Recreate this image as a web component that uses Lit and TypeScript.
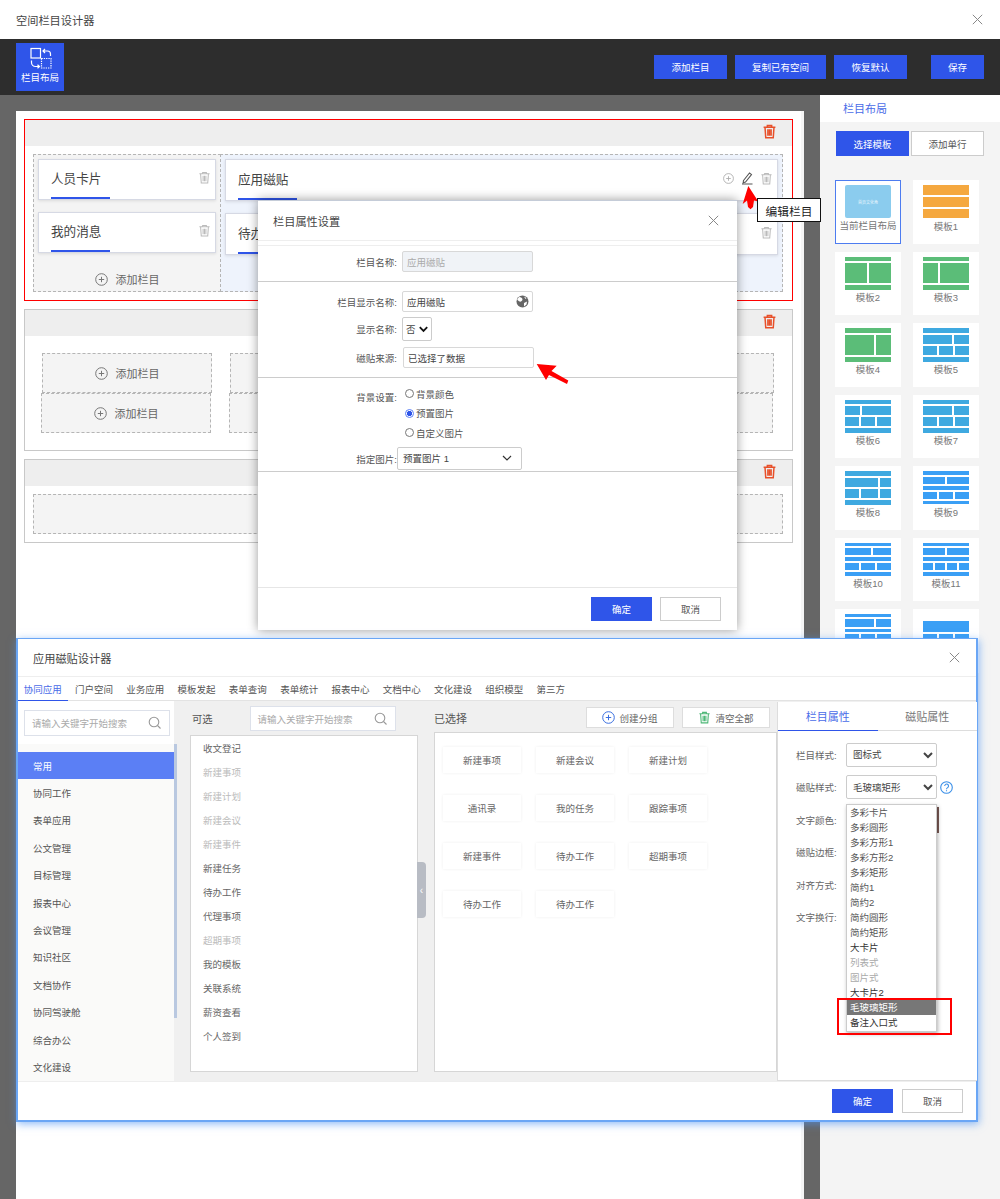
import { LitElement, html, css, svg } from "lit";
import { customElement } from "lit/decorators.js";

type Tpl = { name: string; color: string; rows: [number, string][]; skipFirst?: boolean };
const G = "#5bbd78", B = "#3fa9e0", C = "#3a9ff5", O = "#f5a83f";
const band: [number, string] = [4.5, "1fr"];
const templates: Tpl[] = [
  { name: "模板1", color: O, rows: [[1, "1fr"], [1, "1fr"], [1, "1fr"]] },
  { name: "模板2", color: G, rows: [[5, "1fr"], [20, "1fr 1fr"], [5, "1fr"]] },
  { name: "模板3", color: G, rows: [[5, "1fr"], [20, "1fr 2fr"], [5, "1fr"]] },
  { name: "模板4", color: G, rows: [[5, "1fr"], [20, "2fr 1fr"], [5, "1fr"]] },
  { name: "模板5", color: B, rows: [band, [9, "2fr 1fr"], [9, "1fr 1fr 1fr"], band] },
  { name: "模板6", color: B, rows: [band, [9, "1fr 2fr"], [9, "1fr 1fr 1fr"], band] },
  { name: "模板7", color: B, rows: [band, [9, "2fr 1fr"], [9, "1fr 1fr 1fr"], band] },
  { name: "模板8", color: B, rows: [band, [9, "33fr 11fr"], [9, "14fr 18fr 11fr"], band] },
  { name: "模板9", color: C, rows: [[4, "1fr"], [7, "1fr 1fr"], [4, "1fr"], [7, "1fr 1fr 1fr"], [4, "1fr"]] },
  { name: "模板10", color: C, rows: [[4, "1fr"], [7, "3fr 2fr"], [4, "1fr"], [7, "1fr 1fr 1fr"], [4, "1fr"]] },
  { name: "模板11", color: C, rows: [[4, "1fr"], [7, "1fr 1fr"], [4, "1fr"], [7, "1fr 1fr 1fr 1fr"], [4, "1fr"]] },
  { name: "模板12", color: C, rows: [[3, "1fr"], [7, "2fr 1fr"], [3, "1fr"], [7, "1fr 1fr 1fr"], [3, "1fr"]] },
  { name: "模板13", color: C, skipFirst: true, rows: [[4, "1fr"], [10, "1fr"], [7, "1fr 1fr 1fr"], [3, "1fr"]] },
];

const trash = (c: string, s = 14, w = 1.1) => html`<svg width=${s} height=${s} viewBox="0 0 14 14" fill="none" stroke=${c} stroke-width=${w}><path d="M1.500 3h11M5 3V1.500h4V3M2.800 3l.7 9.800h7l.7-9.800M5.500 5v6M7 5v6M8.500 5v6"/></svg>`;
const plus = (c = "#777", s = 13) => html`<svg width=${s} height=${s} viewBox="0 0 13 13" fill="none" stroke=${c} stroke-width="1"><circle cx="6.500" cy="6.500" r="5.800"/><path d="M6.500 3.800v5.400M3.800 6.500h5.400"/></svg>`;
const closeX = (s = 11) => html`<svg width=${s} height=${s} viewBox="0 0 11 11" fill="none" stroke="#888" stroke-width="1"><path d="M.8.8l9.400 9.400M10.200.8L.8 10.200"/></svg>`;
const search = () => html`<svg width="14" height="14" viewBox="0 0 14 14" fill="none" stroke="#999" stroke-width="1.100"><circle cx="6" cy="6" r="4.800"/><path d="M9.500 9.500l3 3"/></svg>`;

@customElement("app-root")
export class AppRoot extends LitElement {
  static styles = css`
    :host { display: block; position: relative; width: 1000px; height: 1199px; overflow: hidden; background: #666; font-family: "Liberation Sans", "Noto Sans CJK SC", sans-serif; color: #333; font-size: 9.5px; }
    * { box-sizing: border-box; }
    .page { display: flex; flex-direction: column; height: 100%; }
    .title { height: 39px; background: #fff; display: flex; align-items: center; justify-content: space-between; padding: 0 17px 0 16px; font-size: 11.2px; color: #444; }
    .bar { height: 56px; background: #2d2d2d; display: flex; align-items: center; padding: 0 16px; gap: 8px; }
    .layout-btn { width: 48px; height: 48px; background: #2f55e9; color: #fff; display: flex; flex-direction: column; align-items: center; padding-top: 3px; margin-right: auto; }
    .layout-btn span { line-height: 12px; margin-top: 2px; }
    .btn { height: 24px; width: 73px; background: #2f55e9; color: #fff; display: flex; align-items: center; justify-content: center; white-space: nowrap; }
    .btn.wide { width: 91px; }
    .save { margin-left: 16px; width: 53px; }
    .main { flex: 1; min-height: 0; display: flex; padding-left: 16px; gap: 16px; }
    .canvas { width: 788px; margin-top: 16px; background: #fff; border-right: 3px solid #f5f5f5; padding: 8px 8px 0; display: flex; flex-direction: column; gap: 8px; }
    .row { width: 769px; border: 1px solid #c8c8c8; }
    .row.sel { border-color: #f00; height: 182px; }
    .row.two { height: 142px; }
    .row.three { height: 84px; }
    .row-head { height: 26px; background: #eee; display: flex; align-items: center; justify-content: flex-end; padding: 0 15px 4px 0; }
    .dash { border: 1px dashed #b5b5b5; background: #f4f4f4; }
    .grid1 { margin: 8px 9px 8px 8px; height: 138px; display: flex; }
    .col { padding: 4px; display: flex; flex-direction: column; gap: 12px; }
    .col.l { width: 188px; }
    .col.r { flex: 1; background: #eef3fc; margin-left: -1px; }
    .card { height: 42px; background: #fff; border: 1px solid #d6d9e4; box-shadow: 0 1px 3px rgba(0,0,0,.1); position: relative; display: flex; align-items: center; padding: 0 4px 4px 12px; font-size: 12.6px; color: #444; }
    .card::after { content: ""; position: absolute; left: 12px; bottom: 0; width: 59px; height: 2px; background: #2f55e9; }
    .card .sp { flex: 1; }
    .card .icons { display: flex; align-items: center; gap: 6px; }
    .add { display: flex; align-items: center; justify-content: center; gap: 8px; font-size: 11px; color: #666; flex: 1; }
    .col.l .add { padding-top: 6px; }
    .slot .add, .full .add { height: 100%; }
    .slots { padding-top: 17px; display: flex; flex-direction: column; }
    .line { display: flex; gap: 18px; padding-left: 17px; }
    .line.b { padding-left: 16px; }
    .slot { height: 40px; width: 170px; }
    .slot.w { width: 544px; }
    .full { margin: 8px 9px 0 8px; height: 40px; }
    .side { width: 180px; background: #f4f4f4; }
    .side-head { height: 27px; background: #fff; padding: 0 0 2px 23px; display: flex; align-items: center; font-size: 11px; color: #4a6ce8; }
    .side-tabs { display: flex; gap: 2px; padding: 9px 0 0 16px; }
    .side-tabs div { width: 73px; height: 25px; display: flex; align-items: center; justify-content: center; background: #fff; border: 1px solid #ccc; color: #555; }
    .side-tabs .on { background: #2f55e9; border-color: #2f55e9; color: #fff; }
    .tpls { display: grid; grid-template-columns: 66px 66px; grid-auto-rows: 63.5px; gap: 8px 12px; padding: 24px 0 0 15px; }
    .tpl { background: #fff; display: flex; flex-direction: column; align-items: center; padding-top: 5px; color: #777; }
    .tpl.cur { border: 1px solid #4d7cf0; padding-top: 4px; }
    .tpl label { line-height: 12px; margin-top: 2px; white-space: nowrap; }
    .thumb { width: 46px; height: 33.5px; display: flex; flex-direction: column; gap: 2px; flex: none; }
    .thumb .tr { display: grid; gap: 2px; min-height: 0; }
    .cur-thumb { width: 46px; height: 33px; background: #8bccee; border-radius: 2px; color: #e8f6fd; font-size: 4px; display: flex; align-items: center; justify-content: center; flex: none; }

    .dlg1 { position: absolute; left: 258px; top: 200px; width: 479px; height: 430px; background: #fff; border-top: 1px solid #c5ccd8; box-shadow: 0 0 10px rgba(0,0,0,.4); display: flex; flex-direction: column; color: #555; font-size: 9.5px; }
    .d1-head { height: 40px; flex: none; display: flex; align-items: center; justify-content: space-between; padding: 0 18px 0 15px; font-size: 11.2px; color: #444; border-bottom: 1px solid #eee; }
    .sec { border-top: 1px solid #ccc; display: flex; flex-direction: column; flex: none; }
    .sec.a { margin-top: 4px; border-top-color: #eee; padding-top: 5px; height: 36px; }
    .sec.b { padding-top: 9px; height: 96px; }
    .sec.c { padding-top: 6px; height: 95px; border-bottom: 1px solid #ccc; }
    .f { display: flex; align-items: center; }
    .f > label { width: 139px; text-align: right; white-space: nowrap; flex: none; }
    .inp { width: 131px; height: 21px; margin-left: 5px; border: 1px solid #d8d8d8; border-radius: 2px; display: flex; align-items: center; justify-content: space-between; padding: 0 3px 0 4px; color: #444; }
    .inp.dis { background: #f0f3f7; color: #aaa; }
    .inp.src { margin-left: 6px; padding-left: 4px; }
    select { font: inherit; color: #444; background: #fff; border: 1px solid #ccc; border-radius: 2px; padding: 0 0 0 2px; }
    .yn { width: 30px; height: 24px; margin-left: 5px; border: 1px solid #ccc; border-radius: 2px; display: flex; align-items: center; gap: 3px; padding-left: 3px; color: #444; }
    .mt5 { margin-top: 5px; }
    .mt6 { margin-top: 6px; }
    .f.top { align-items: flex-start; }
    .f.top > label { margin-top: 6px; }
    .radios { margin-left: 8px; display: flex; flex-direction: column; }
    .radio { height: 19.5px; display: flex; align-items: center; gap: 2px; }
    .dot { width: 9px; height: 9px; border: 1px solid #777; border-radius: 50%; background: #fff; display: block; }
    .dot.on { border-color: #5b7ff5; background: radial-gradient(circle, #2f55e9 0 2.4px, #fff 2.9px); }
    .pick { width: 125px; height: 23px; border: 1px solid #ccc; border-radius: 2px; padding: 0 9px 0 5px; display: flex; align-items: center; justify-content: space-between; margin-top: -1px; color: #444; }
    .mt4 { margin-top: 5px; }
    .grow { flex: 1; }
    .foot { display: flex; justify-content: flex-end; gap: 8px; flex: none; }
    .d1-foot { height: 43px; border-top: 1px solid #e6e6e6; padding: 9px 16px 0 0; }
    .ok, .no { width: 61px; height: 24px; display: flex; align-items: center; justify-content: center; font-size: 9.5px; }
    .ok { background: #2f55e9; color: #fff; }
    .no { background: #fff; border: 1px solid #ccc; color: #555; }
    .arrows { position: absolute; left: 0; top: 0; }
    .tip { position: absolute; left: 757px; top: 198px; width: 64px; height: 24px; background: #fff; border: 1px solid #111; font-size: 11.7px; color: #222; display: flex; align-items: center; justify-content: center; }

    .dlg2 { position: absolute; left: 16px; top: 638px; width: 962px; height: 484px; background: #fff; border: 2px solid #6aa6f5; border-top-width: 1px; box-shadow: 1px 2px 8px rgba(80,150,245,.65); display: flex; flex-direction: column; }
    .d2-head { height: 38px; flex: none; border-bottom: 1px solid #eee; display: flex; align-items: center; justify-content: space-between; padding: 0 16px 0 15px; font-size: 11.2px; color: #444; }
    .d2-tabs { height: 24px; flex: none; display: flex; border-bottom: 1px solid #e3e3e3; color: #555; }
    .d2-tabs div { padding: 0 6.65px; height: 24px; display: flex; align-items: center; white-space: nowrap; }
    .d2-tabs .on { color: #4a6ce8; border-bottom: 1px solid #2f55e9; padding-left: 5.65px; }
    .d2-body { height: 380px; flex: none; display: flex; background: #f0f0f0; }
    .left { width: 156px; flex: none; display: flex; flex-direction: column; background: #fff; }
    .l-top { height: 43px; padding: 9px 4px 0 6px; flex: none; }
    .srch { border: 1px solid #dde1ea; background: #fff; display: flex; align-items: center; justify-content: space-between; color: #aaa; height: 26px; padding: 0 7px; }
    .menu { flex: 1; background: #fafaf9; padding-top: 8px; overflow: hidden; color: #555; }
    .menu div { height: 27.4px; padding-left: 15px; display: flex; align-items: center; }
    .menu .on { background: #5b7ff5; color: #fff; }
    .track { width: 3px; flex: none; padding-top: 43px; }
    .track div { height: 274px; background: #b9c8e0; }
    .mid { flex: 1; display: flex; padding-left: 13px; }
    .c1 { width: 228px; padding: 5px 0 9px; display: flex; flex-direction: column; position: relative; }
    .c2 { width: 343px; margin-left: 16px; padding: 6px 0 9px; display: flex; flex-direction: column; }
    .h1 { height: 25px; margin-bottom: 4px; display: flex; align-items: center; gap: 37px; padding-left: 2px; font-size: 10.3px; color: #555; flex: none; }
    .h1 .srch { width: 146px; height: 25px; font-size: 9.5px; }
    .h2 { height: 21px; margin-bottom: 4px; display: flex; align-items: center; font-size: 11px; color: #555; gap: 8px; flex: none; }
    .h2 span { margin-right: auto; }
    .hbtn { width: 88px; height: 21px; background: #fff; border: 1px solid #ddd; display: flex; align-items: center; justify-content: center; gap: 4px; font-size: 9.5px; color: #666; }
    .h2 .hbtn:last-child { margin-right: 7px; }
    .box { flex: 1; background: #fff; border: 1px solid #d6d6d6; }
    .opts { padding: 0 0 0 12px; color: #666; }
    .opts div { height: 24px; display: flex; align-items: center; }
    .opts .off { color: #bbb; }
    .tiles { display: grid; grid-template-columns: repeat(3, 78px); grid-auto-rows: 26px; gap: 22px 15px; padding: 14px 0 0 8px; align-content: start; }
    .tiles div { background: #fff; box-shadow: 0 0 3px rgba(0,0,0,.07); display: flex; align-items: center; justify-content: center; color: #666; }
    .handle { position: absolute; left: 227px; top: 161px; width: 9px; height: 56px; background: #b8bcc4; border-radius: 0 4px 4px 0; display: flex; align-items: center; justify-content: center; color: #fff; font-size: 10px; }
    .panel { width: 200px; flex: none; margin-top: 1px; background: #fff; border-left: 1px solid #ddd; border-bottom: 1px solid #ddd; position: relative; color: #666; }
    .p-tabs { height: 29px; display: flex; border-bottom: 1px solid #ddd; font-size: 11px; color: #777; }
    .p-tabs div { width: 100px; display: flex; align-items: center; justify-content: center; }
    .p-tabs .on { color: #4a6ce8; border-bottom: 1px solid #2f55e9; height: 29px; }
    .p-form { padding: 7.5px 0 0 18px; }
    .p-row { height: 32.5px; display: flex; align-items: center; }
    .p-row label { width: 50px; flex: none; }
    .p-row select { width: 91px; height: 24px; }
    .help { margin-left: 3px; }
    .swatch { position: absolute; left: 159px; top: 105px; width: 2px; height: 26px; background: #7a5a55; }
    .drop { position: absolute; left: 68px; top: 102px; width: 91px; height: 228px; background: #fff; border: 1px solid #ccc; box-shadow: 1px 2px 4px rgba(0,0,0,.3); color: #555; }
    .drop div { height: 15px; line-height: 15px; padding-left: 3px; }
    .drop .off { color: #aaa; }
    .drop .hl { background: #777; color: #fff; }
    .drop .bk { color: #333; }
    .redbox { position: absolute; left: 819px; top: 359px; width: 115px; height: 36.5px; border: 2px solid #f00; }
    .d2-foot { flex: 1; padding: 7px 13px 0 0; border-top: 1px solid #eee; gap: 9px; }
  `;

  private thumb(t: Tpl) {
    return html`<div class="thumb">${t.rows.map(([h, cols], i) => html`
      <div class="tr" style="flex:${h} 1 0;grid-template-columns:${cols}">
        ${cols.split(" ").map(() => html`<div style="background:${t.skipFirst && i === 0 ? "transparent" : t.color}"></div>`)}
      </div>`)}</div>`;
  }

  private addBtn() {
    return html`<div class="add">${plus()}<span>添加栏目</span></div>`;
  }

  render() {
    const tabs = ["门户空间", "业务应用", "模板发起", "表单查询", "表单统计", "报表中心", "文档中心", "文化建设", "组织模型", "第三方"];
    const menu = ["协同工作", "表单应用", "公文管理", "目标管理", "报表中心", "会议管理", "知识社区", "文档协作", "协同驾驶舱", "综合办公", "文化建设"];
    const opts: [string, boolean][] = [["收文登记", false], ["新建事项", true], ["新建计划", true], ["新建会议", true], ["新建事件", true], ["新建任务", false], ["待办工作", false], ["代理事项", false], ["超期事项", true], ["我的模板", false], ["关联系统", false], ["薪资查看", false], ["个人签到", false]];
    const tiles = ["新建事项", "新建会议", "新建计划", "通讯录", "我的任务", "跟踪事项", "新建事件", "待办工作", "超期事项", "待办工作", "待办工作"];
    const drop = ["多彩卡片", "多彩圆形", "多彩方形1", "多彩方形2", "多彩矩形", "简约1", "简约2", "简约圆形", "简约矩形"];
    return html`
      <div class="page">
        <div class="title"><span>空间栏目设计器</span>${closeX()}</div>
        <div class="bar">
          <div class="layout-btn">
            <svg width="24" height="24" viewBox="0 0 24 24" fill="none" stroke="#fff" stroke-width="1.200">
              <rect x="3" y="2.500" width="9.500" height="9.500"/>
              <rect x="13.500" y="12.500" width="9.500" height="9.500" stroke-dasharray="1.300 1"/>
              <path d="M15 5h4.500a3 3 0 0 1 3 3v2M17 3l-2 2 2 2"/>
              <path d="M3.500 14.500v2a4 4 0 0 0 4 4h3.500M9.500 18.700l2 1.800-2 1.800"/>
            </svg>
            <span>栏目布局</span>
          </div>
          <div class="btn">添加栏目</div>
          <div class="btn wide">复制已有空间</div>
          <div class="btn">恢复默认</div>
          <div class="btn save">保存</div>
        </div>
        <div class="main">
          <div class="canvas">
            <div class="row sel">
              <div class="row-head">${trash("#e8502a", 15, 1.4)}</div>
              <div class="grid1">
                <div class="col l dash">
                  <div class="card">人员卡片<span class="sp"></span>${trash("#bbb", 13)}</div>
                  <div class="card">我的消息<span class="sp"></span>${trash("#bbb", 13)}</div>
                  ${this.addBtn()}
                </div>
                <div class="col r dash">
                  <div class="card">应用磁贴<span class="sp"></span>
                    <span class="icons">${plus("#aaa", 11)}
                      <svg width="14" height="14" viewBox="0 0 14 14" fill="none" stroke="#555" stroke-width="1.100"><path d="M3.500 9.500L9.500 2l2 1.600-6 7.500-2.300.7zM2 13h10.500"/></svg>
                      ${trash("#bbb", 13)}</span>
                  </div>
                  <div class="card">待办工作<span class="sp"></span>${trash("#bbb", 13)}</div>
                </div>
              </div>
            </div>
            <div class="row two">
              <div class="row-head">${trash("#e8502a", 15, 1.4)}</div>
              <div class="slots">
                <div class="line"><div class="slot dash">${this.addBtn()}</div><div class="slot w dash">${this.addBtn()}</div></div>
                <div class="line b"><div class="slot dash">${this.addBtn()}</div><div class="slot w dash">${this.addBtn()}</div></div>
              </div>
            </div>
            <div class="row three">
              <div class="row-head">${trash("#e8502a", 15, 1.4)}</div>
              <div class="full dash">${this.addBtn()}</div>
            </div>
          </div>
          <div class="side">
            <div class="side-head">栏目布局</div>
            <div class="side-tabs"><div class="on">选择模板</div><div>添加单行</div></div>
            <div class="tpls">
              <div class="tpl cur"><div class="cur-thumb">首页文化角</div><label>当前栏目布局</label></div>
              ${templates.map((t) => html`<div class="tpl">${this.thumb(t)}<label>${t.name}</label></div>`)}
            </div>
          </div>
        </div>
      </div>

      <div class="dlg1">
        <div class="d1-head"><span>栏目属性设置</span>${closeX()}</div>
        <div class="sec a">
          <div class="f"><label>栏目名称:</label><div class="inp dis">应用磁贴</div></div>
        </div>
        <div class="sec b">
          <div class="f"><label>栏目显示名称:</label><div class="inp">应用磁贴
            <svg width="13" height="13" viewBox="0 0 13 13"><circle cx="6.500" cy="6.500" r="6" fill="#666"/><path d="M3 2c2 0 3.500 1 3.500 2.500S4.500 7 3.500 6.500 1.500 5 1.200 4.500zM8 8l3-1.500-.5 3-2.500 2zM8 1.500l2.500 1.500-1 1z" fill="#fff"/></svg>
          </div></div>
          <div class="f mt5"><label>显示名称:</label>
            <div class="yn">否<svg width="9" height="7" viewBox="0 0 9 7" fill="none" stroke="#111" stroke-width="1.800"><path d="M.8 1.200l3.700 3.700 3.700-3.700"/></svg></div>
          </div>
          <div class="f mt6"><label>磁贴来源:</label><div class="inp src">已选择了数据</div></div>
        </div>
        <div class="sec c">
          <div class="f top"><label>背景设置:</label>
            <div class="radios">
              <div class="radio"><i class="dot"></i>背景颜色</div>
              <div class="radio"><i class="dot on"></i>预置图片</div>
              <div class="radio"><i class="dot"></i>自定义图片</div>
            </div>
          </div>
          <div class="f mt4"><label>指定图片:</label>
            <div class="pick"><span>预置图片 1</span>
              <svg width="10" height="7" viewBox="0 0 10 7" fill="none" stroke="#333" stroke-width="1.200"><path d="M1 1l4 4 4-4"/></svg>
            </div>
          </div>
        </div>
        <div class="grow"></div>
        <div class="foot d1-foot"><div class="ok">确定</div><div class="no">取消</div></div>
      </div>

      <svg class="arrows" width="1000" height="400" viewBox="0 0 1000 400">
        ${svg`<polygon fill="#f00" points="748.300,186 758.300,201.600 754,200.500 753,207 750.500,209.300 748,207 747,200.500 742.700,204"/>`}
        ${svg`<polygon fill="#f00" points="536.700,364 556.700,365.700 551.500,371 568.300,380.500 567,384 549,375 546,380"/>`}
      </svg>
      <div class="tip">编辑栏目</div>

      <div class="dlg2">
        <div class="d2-head"><span>应用磁贴设计器</span>${closeX()}</div>
        <div class="d2-tabs"><div class="on">协同应用</div>${tabs.map((t) => html`<div>${t}</div>`)}</div>
        <div class="d2-body">
          <div class="left">
            <div class="l-top"><div class="srch"><span>请输入关键字开始搜索</span>${search()}</div></div>
            <div class="menu"><div class="on">常用</div>${menu.map((m) => html`<div>${m}</div>`)}</div>
          </div>
          <div class="track"><div></div></div>
          <div class="mid">
            <div class="c1">
              <div class="h1"><span>可选</span><div class="srch"><span>请输入关键字开始搜索</span>${search()}</div></div>
              <div class="box opts">${opts.map(([t, off]) => html`<div class=${off ? "off" : ""}>${t}</div>`)}</div>
              <div class="handle">‹</div>
            </div>
            <div class="c2">
              <div class="h2"><span>已选择</span>
                <div class="hbtn">${plus("#3a6fe0")}创建分组</div>
                <div class="hbtn">
                  <svg width="13" height="13" viewBox="0 0 14 14" fill="none" stroke="#4fb878" stroke-width="1.200"><path d="M1.500 3h11M5 3V1.500h4V3M2.800 3l.7 9.800h7l.7-9.800M5.500 5v6M7 5v6M8.500 5v6"/></svg>
                  清空全部</div>
              </div>
              <div class="box tiles">${tiles.map((t) => html`<div>${t}</div>`)}</div>
            </div>
          </div>
          <div class="panel">
            <div class="p-tabs"><div class="on">栏目属性</div><div>磁贴属性</div></div>
            <div class="p-form">
              <div class="p-row"><label>栏目样式:</label><select><option>图标式</option></select></div>
              <div class="p-row"><label>磁贴样式:</label><select><option>毛玻璃矩形</option></select>
                <svg class="help" width="13" height="13" viewBox="0 0 13 13" fill="none" stroke="#3a8fe8" stroke-width="1.100"><circle cx="6.500" cy="6.500" r="5.800"/><path d="M4.700 5a1.900 1.900 0 1 1 2.900 1.600c-.8.500-1.100.9-1.100 1.700M6.500 9.300v1"/></svg>
              </div>
              <div class="p-row"><label>文字颜色:</label></div>
              <div class="p-row"><label>磁贴边框:</label></div>
              <div class="p-row"><label>对齐方式:</label></div>
              <div class="p-row"><label>文字换行:</label></div>
            </div>
            <div class="swatch"></div>
            <div class="drop">
              ${drop.map((d) => html`<div>${d}</div>`)}
              <div class="bk">大卡片</div><div class="off">列表式</div><div class="off">图片式</div><div class="bk">大卡片2</div>
              <div class="hl">毛玻璃矩形</div><div class="bk">备注入口式</div>
            </div>
          </div>
        </div>
        <div class="foot d2-foot"><div class="ok">确定</div><div class="no">取消</div></div>
        <div class="redbox"></div>
      </div>
    `;
  }
}
